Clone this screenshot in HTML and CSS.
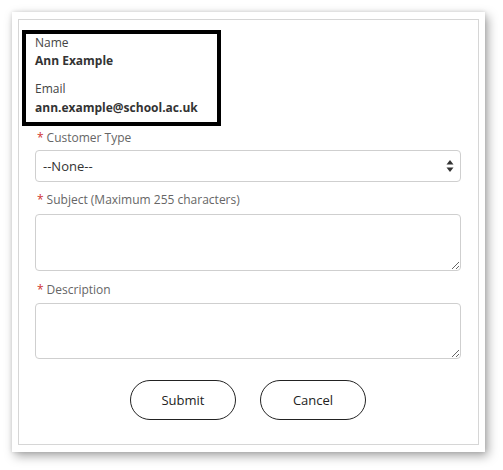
FILE: index.html
```html
<!DOCTYPE html>
<html>
<head>
<meta charset="utf-8">
<link rel="stylesheet" href="styles.css">
</head>
<body>
<div class="card">
  <div class="inner">
    <div class="contact">
      <div class="c-label">Name</div>
      <div class="c-value">Ann Example</div>
      <div class="c-label c-gap">Email</div>
      <div class="c-value c-v2">ann.example@school.ac.uk</div>
    </div>
    <form class="form">
      <label class="f-label l1"><span class="req">*</span>Customer Type</label>
      <div class="select-wrap">
        <select class="select"><option>--None--</option></select>
        <svg class="arrows" width="8" height="14" viewBox="0 0 8 14"><path d="M4 1 L7.5 5.5 L0.5 5.5 Z" fill="#333"/><path d="M4 13 L7.5 8.5 L0.5 8.5 Z" fill="#333"/></svg>
      </div>
      <label class="f-label l2"><span class="req">*</span>Subject (Maximum 255 characters)</label>
      <textarea class="ta ta1"></textarea>
      <label class="f-label l3"><span class="req">*</span>Description</label>
      <textarea class="ta ta2"></textarea>
      <div class="buttons">
        <button type="button" class="btn">Submit</button>
        <button type="button" class="btn">Cancel</button>
      </div>
    </form>
  </div>
</div>
</body>
</html>
```
FILE: styles.css
```css
html, body {
  margin: 0;
  padding: 0;
  background: #fff;
}
body {
  font-family: "Open Sans", "Liberation Sans", sans-serif;
  color: #333;
  min-height: 470px;
  padding-top: 12px;
  box-sizing: border-box;
}
.card {
  margin: 0 0 0 12px;
  width: 473px;
  height: 440px;
  box-sizing: border-box;
  padding: 7px 6px;
  background: #fff;
  box-shadow: 3px 4px 10px rgba(0, 0, 0, 0.35), 0 0 4px rgba(0, 0, 0, 0.12);
}
.inner {
  height: 100%;
  box-sizing: border-box;
  border: 1px solid #d6d6d6;
  padding: 10px 17px 0 3px;
}
.contact {
  width: 199px;
  height: 96px;
  box-sizing: border-box;
  border: 4px solid #000;
  padding: 1px 0 0 9px;
}
.c-label {
  font-size: 12px;
  line-height: 16px;
  color: #444;
}
.c-value {
  font-size: 12px;
  line-height: 16px;
  font-weight: 700;
  color: #333;
  margin-top: 2px;
}
.c-v2 {
  margin-top: 3px;
}
.c-gap {
  margin-top: 12px;
}
.form {
  margin: 0 0 0 13px;
  display: flex;
  flex-direction: column;
}
.f-label {
  display: block;
  font-size: 12px;
  line-height: 16px;
  color: #666;
}
.req {
  color: #d0312d;
  margin-right: 3px;
  margin-left: 2px;
}
.l1 { margin-top: 4px; }
.l2 { margin-top: 10px; }
.l3 { margin-top: 11px; }
.select-wrap {
  position: relative;
  margin-top: 4px;
}
.select {
  display: block;
  width: 100%;
  height: 32px;
  box-sizing: border-box;
  -webkit-appearance: none;
  appearance: none;
  border: 1px solid #cfcfcf;
  border-radius: 4px;
  background: #fff;
  font-family: "Open Sans", "Liberation Sans", sans-serif;
  font-size: 13px;
  color: #333;
  padding: 0 0 0 7px;
  margin: 0;
}
.arrows {
  position: absolute;
  right: 7px;
  top: 9px;
}
.ta {
  display: block;
  width: 100%;
  box-sizing: border-box;
  border: 1px solid #cfcfcf;
  border-radius: 4px;
  background: #fff;
  margin: 6px 0 0 0;
  padding: 4px;
  font-family: "Open Sans", "Liberation Sans", sans-serif;
  font-size: 13px;
}
.ta1 { height: 57px; }
.ta2 { height: 56px; margin-top: 5px; }
.buttons {
  display: flex;
  justify-content: center;
  gap: 24px;
  margin-top: 21px;
}
.btn {
  width: 106px;
  height: 40px;
  box-sizing: border-box;
  border: 1px solid #222;
  border-radius: 20px;
  background: #fff;
  font-family: "Open Sans", "Liberation Sans", sans-serif;
  font-size: 13px;
  color: #222;
  padding: 0;
}
```
